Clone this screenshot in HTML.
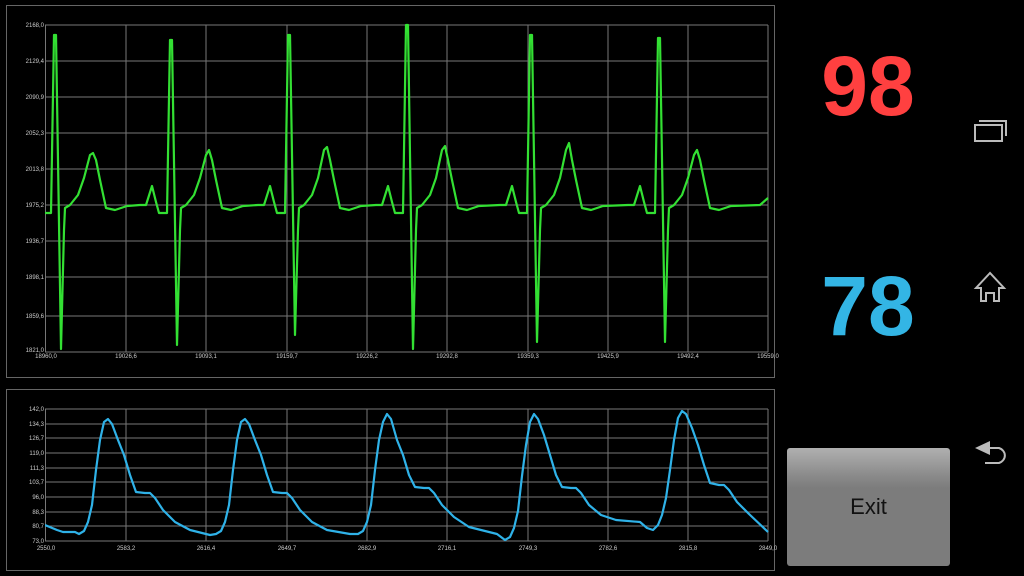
<!DOCTYPE html>
<html><head><meta charset="utf-8"><style>
html,body{margin:0;padding:0;background:#000;width:1024px;height:576px;overflow:hidden;font-family:"Liberation Sans",sans-serif}
.num{position:absolute;font-weight:bold;font-size:84px;line-height:84px;width:180px;text-align:center;left:778px}
#exit{position:absolute;left:787px;top:448px;width:163px;height:118px;border-radius:3px;background:linear-gradient(#b0b0b0 0px,#8a8a8a 28px,#7c7c7c 40px,#7c7c7c);color:#111;font-size:22px;text-align:center;line-height:118px}
</style></head><body>
<svg width="1024" height="576" style="position:absolute;left:0;top:0" font-family="Liberation Sans, sans-serif">
<defs>
<clipPath id="c1"><rect x="45" y="20" width="724" height="335"/></clipPath>
<clipPath id="c2"><rect x="45" y="405" width="724" height="140"/></clipPath>
</defs>
<rect x="6.5" y="5.5" width="768" height="372" fill="none" stroke="#666" stroke-width="1"/>
<rect x="6.5" y="389.5" width="768" height="181" fill="none" stroke="#666" stroke-width="1"/>
<g stroke="#777" stroke-width="1">
<path d="M45,25H768M45,61H768M45,97H768M45,133H768M45,169H768M45,205H768M45,241H768M45,277H768M45,316H768M45,352H768"/>
<path d="M45.5,25V352M126,25V352M206,25V352M287,25V352M367,25V352M447,25V352M528,25V352M608,25V352M688,25V352M768,25V352"/>
<path d="M45,409H768M45,424H768M45,438H768M45,453H768M45,468H768M45,482H768M45,497H768M45,512H768M45,526H768M45,541H768"/>
<path d="M45.5,409V541M126,409V541M206,409V541M287,409V541M367,409V541M447,409V541M528,409V541M608,409V541M688,409V541M768,409V541"/>
</g>
<g fill="#ccc" font-size="6" text-anchor="end">
<text x="44" y="27">2168,0</text><text x="44" y="63">2129,4</text><text x="44" y="99">2090,9</text><text x="44" y="135">2052,3</text><text x="44" y="171">2013,8</text><text x="44" y="207">1975,2</text><text x="44" y="243">1936,7</text><text x="44" y="279">1898,1</text><text x="44" y="318">1859,6</text><text x="44" y="352">1821,0</text>
<text x="44" y="411">142,0</text><text x="44" y="426">134,3</text><text x="44" y="440">126,7</text><text x="44" y="455">119,0</text><text x="44" y="470">111,3</text><text x="44" y="484">103,7</text><text x="44" y="499">96,0</text><text x="44" y="514">88,3</text><text x="44" y="528">80,7</text><text x="44" y="543">73,0</text>
</g>
<g fill="#ccc" font-size="6" text-anchor="middle">
<text x="46" y="358">18960,0</text><text x="126" y="358">19026,6</text><text x="206" y="358">19093,1</text><text x="287" y="358">19159,7</text><text x="367" y="358">19226,2</text><text x="447" y="358">19292,8</text><text x="528" y="358">19359,3</text><text x="608" y="358">19425,9</text><text x="688" y="358">19492,4</text><text x="768" y="358">19559,0</text>
<text x="46" y="550">2550,0</text><text x="126" y="550">2583,2</text><text x="206" y="550">2616,4</text><text x="287" y="550">2649,7</text><text x="367" y="550">2682,9</text><text x="447" y="550">2716,1</text><text x="528" y="550">2749,3</text><text x="608" y="550">2782,6</text><text x="688" y="550">2815,8</text><text x="768" y="550">2849,0</text>
</g>
<g clip-path="url(#c1)">
<path fill="none" stroke="#33e033" stroke-width="2.2" stroke-linejoin="round" d="M45,213 L51,213 L54,35 L56,35 L61,349 L64,230 L65,208 L70,205 L78,195 L84,178 L90,155 L93,153 L96,160 L100,180 L106,208 L115,210 L127,206 L140,205 L146,205 L152,186 L156,202 L159,213 L167,213
L170,40 L172,40 L177,345 L180,230 L181,208 L186,205 L194,195 L200,178 L206,155 L209,150 L212,160 L216,180 L222,208 L231,210 L243,206 L258,205 L264,205 L270,186 L274,202 L277,213 L285,213
L288,35 L290,35 L295,335 L298,230 L299,208 L304,205 L312,195 L318,178 L324,150 L327,147 L330,160 L334,180 L340,208 L349,210 L361,206 L376,205 L382,205 L388,186 L392,202 L395,213 L403,213
L406,25 L408,25 L413,349 L416,230 L417,208 L422,205 L430,195 L436,178 L442,150 L445,146 L448,160 L452,180 L458,208 L467,210 L479,206 L500,205 L506,205 L512,186 L516,202 L519,213 L527,213
L530,35 L532,35 L537,342 L540,230 L541,208 L546,205 L554,195 L560,178 L566,150 L569,143 L572,160 L576,180 L582,208 L591,210 L603,206 L628,205 L634,205 L640,186 L644,202 L647,213 L655,213
L658,38 L660,38 L665,342 L668,230 L669,208 L674,205 L682,195 L688,178 L694,155 L697,150 L700,160 L704,180 L710,208 L719,210 L731,206 L760,205 L768,198"/>
</g>
<g clip-path="url(#c2)">
<path fill="none" stroke="#2fb2e8" stroke-width="2.2" stroke-linejoin="round" d="M45,525 L57,530 L63,532 L75,532 L79,534 L84,531 L88,522 L92,505 L96,470 L100,440 L104,422 L108,419 L112,424 L118,440 L124,455 L130,475 L136,492 L145,493 L150,493 L155,498 L163,510 L175,522 L190,530 L210,535
L216,534 L221,531 L225,522 L229,505 L233,470 L237,440 L241,422 L245,419 L249,424 L255,440 L261,455 L267,475 L273,492 L282,493 L287,493 L292,498 L300,510 L312,522 L327,530 L350,534
L358,534 L363,531 L367,522 L371,505 L375,470 L379,440 L383,422 L387,414 L391,419 L397,440 L403,455 L409,475 L415,487 L424,488 L429,488 L434,493 L442,505 L454,517 L469,527 L497,534
L505,540 L510,537 L514,528 L518,511 L522,476 L526,445 L530,422 L534,414 L538,419 L544,435 L550,455 L556,475 L562,487 L571,488 L576,488 L581,493 L589,505 L601,515 L616,520 L640,522 L647,528
L653,530 L658,525 L662,515 L666,498 L670,470 L674,440 L678,418 L682,411 L686,414 L692,428 L698,445 L704,465 L710,483 L719,485 L724,485 L729,490 L737,502 L749,514 L768,532"/>
</g>
<g fill="none" stroke="#bbb" stroke-width="2">
<rect x="975" y="125" width="27" height="16"/>
<path d="M979,121H1006V136"/>
<path d="M990,273 L976,288 H981 V301 H986 V293 H994 V301 H999 V288 H1004 Z" stroke-linejoin="miter"/>
<path d="M990,448 H999 A9,8 0 0 1 999,463 H985"/>
</g>
<path d="M975,448 L990,441 V455 Z" fill="#bbb"/>
</svg>
<div class="num" style="top:44px;color:#ff4040">98</div>
<div class="num" style="top:264px;color:#33b5e5">78</div>
<div id="exit">Exit</div>
</body></html>
